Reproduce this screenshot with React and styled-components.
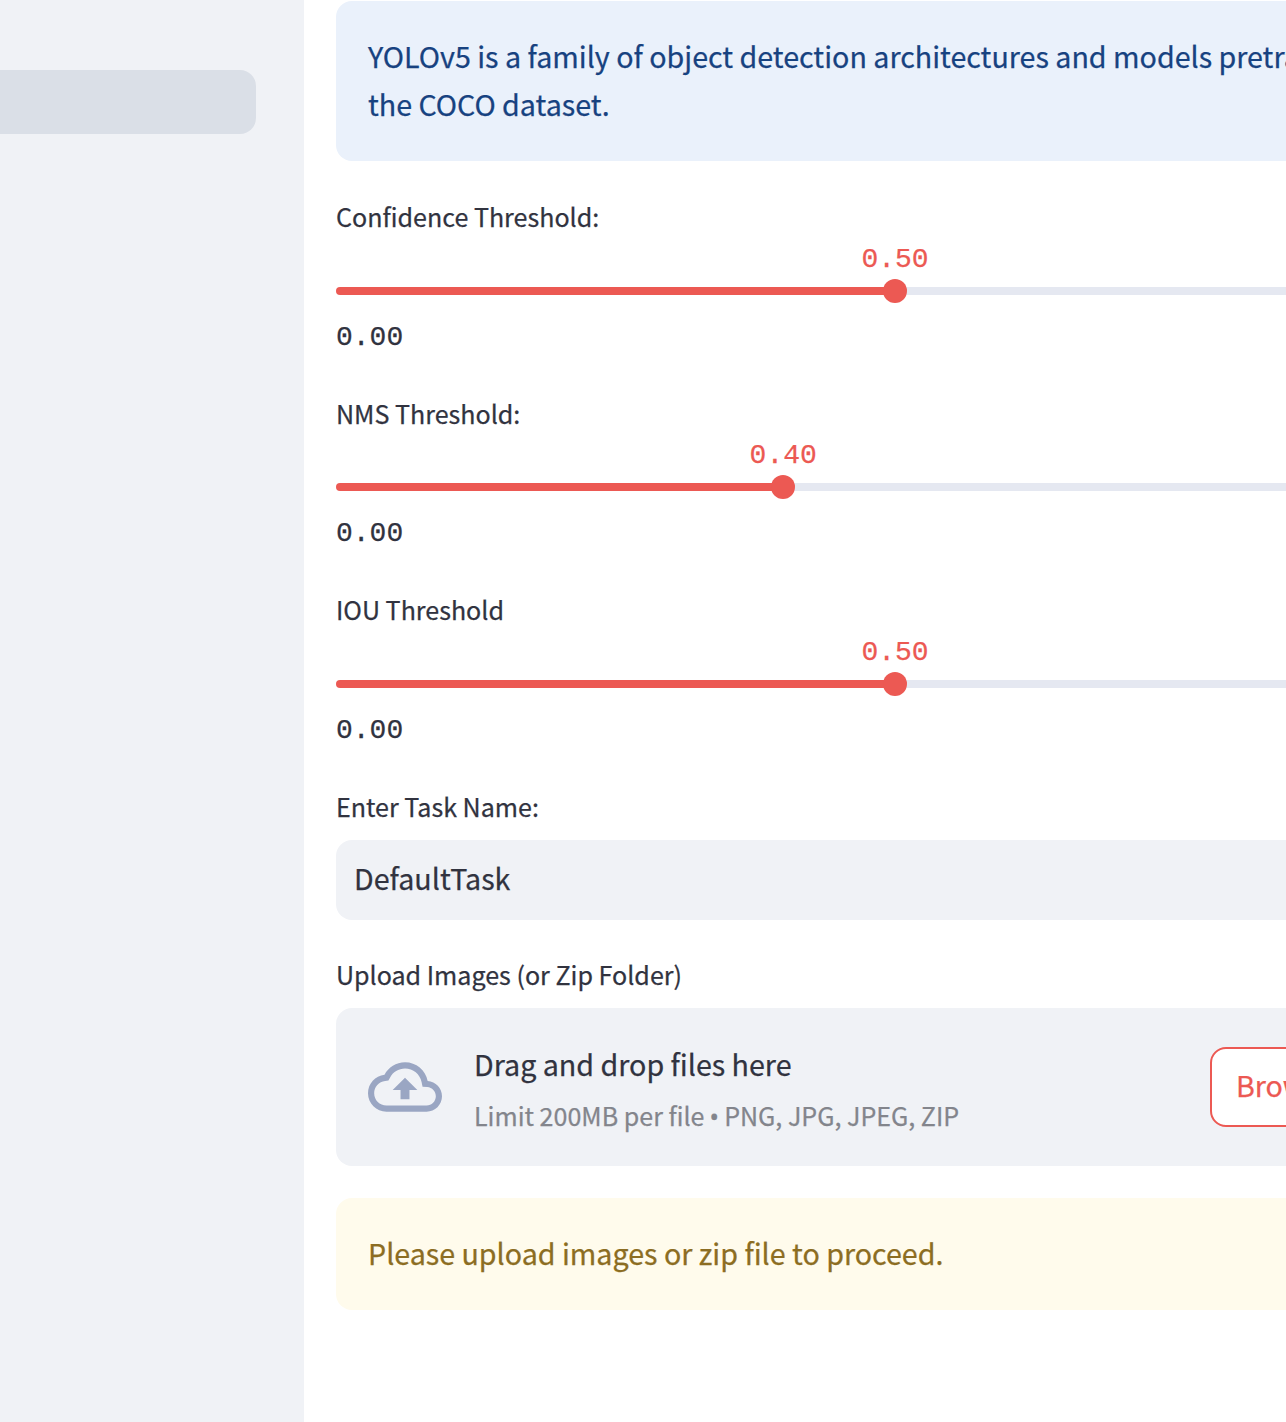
import React from "react";
import styled, { createGlobalStyle } from "styled-components";

const GlobalStyle = createGlobalStyle`
  *, *::before, *::after { box-sizing: border-box; }
  html, body { margin: 0; padding: 0; overflow: hidden; background: #ffffff; }
  body {
    font-family: "Noto Sans CJK SC", "Noto Sans", sans-serif;
    font-size: 28.65px;
    -webkit-text-stroke: 0.25px currentColor;
    color: #31333f;
  }
`;

const Page = styled.div`
  display: flex;
  width: 1286px;
  height: 1422px;
  overflow: hidden;
`;

const Sidebar = styled.nav`
  flex: 0 0 304px;
  padding: 70px 48px 0 0;
  background: #f0f2f6;
`;

const ActiveLink = styled.div`
  height: 64px;
  border-radius: 0 16px 16px 0;
  background: #dadfe7;
`;

const Main = styled.main`
  flex: 0 0 1182px;
  padding: 1px 32px 0;
`;

const Alert = styled.div`
  padding: 31px 32px 33px;
  border-radius: 16px;
  line-height: 48px;
  color: ${(p) => p.$color};
  background: ${(p) => p.$background};
`;

const Field = styled.section`
  height: ${(p) => p.$height}px;
  margin-top: 32px;
`;

const Label = styled.label`
  display: block;
  height: ${(p) => p.$height || 48}px;
  margin-bottom: 8px;
  font-size: 25.07px;
  line-height: ${(p) => p.$line || 46}px;
`;

const Value = styled.div`
  width: 68px;
  margin-left: calc(${(p) => p.$percent}% - 34px);
  font-family: "Liberation Mono", monospace;
  font-size: 28px;
  line-height: 32px;
  text-align: center;
  color: #ec5953;
`;

const Track = styled.div`
  display: flex;
  align-items: center;
  height: 24px;
  margin-top: 3px;
`;

const Filled = styled.div`
  flex: 0 0 calc(${(p) => p.$percent}% - 11px);
  height: 8px;
  border-radius: 4px 0 0 4px;
  background: #ec5953;
`;

const Thumb = styled.div`
  position: relative;
  z-index: 1;
  flex: 0 0 24px;
  height: 24px;
  margin: 0 -1px;
  border-radius: 50%;
  background: #ec5953;
`;

const Rest = styled.div`
  flex: 1;
  height: 8px;
  border-radius: 0 4px 4px 0;
  background: #e5e8f1;
`;

const Minimum = styled.div`
  margin-top: 19px;
  font-family: "Liberation Mono", monospace;
  font-size: 28px;
  line-height: 32px;
`;

const TextInput = styled.div`
  height: 80px;
  padding: 0 18px;
  border-radius: 16px;
  line-height: 75px;
  background: #f0f2f6;
`;

const Dropzone = styled.div`
  display: flex;
  align-items: center;
  height: 158px;
  padding: 0 32px;
  border-radius: 16px;
  background: #f0f2f6;
`;

const CloudIcon = styled.svg`
  flex: none;
  width: 74px;
  height: 74px;
  margin-right: 32px;
  fill: #9aa6c3;
`;

const DropText = styled.div`
  flex: 1;
  display: flex;
  flex-direction: column;
  padding-top: 4px;
`;

const DropTitle = styled.span`
  line-height: 52px;
`;

const DropHint = styled.span`
  font-size: 25.05px;
  line-height: 50px;
  color: #83858c;
`;

const Bullet = styled.span`
  margin: 0 -0.5px;
  font-family: "Noto Sans", sans-serif;
`;

const BrowseButton = styled.button`
  width: 212px;
  height: 80px;
  padding: 0 0 5px 24px;
  border: 2px solid #ec5953;
  border-radius: 16px;
  font: inherit;
  text-align: left;
  white-space: nowrap;
  color: #ec5953;
  background: #ffffff;
`;

function Slider({ label, value }) {
  const percent = value * 100;
  return (
    <Field $height={164.7}>
      <Label $height={42.6}>{label}</Label>
      <Value $percent={percent}>{value.toFixed(2)}</Value>
      <Track>
        <Filled $percent={percent} />
        <Thumb />
        <Rest />
      </Track>
      <Minimum>0.00</Minimum>
    </Field>
  );
}

export default function App() {
  return (
    <>
      <GlobalStyle />
      <Page>
        <Sidebar>
          <ActiveLink />
        </Sidebar>
        <Main>
          <Alert $color="#174280" $background="#eaf1fb">
            YOLOv5 is a family of object detection architectures and models pretrained on the COCO
            dataset.
          </Alert>
          <Slider label="Confidence Threshold:" value={0.5} />
          <Slider label="NMS Threshold:" value={0.4} />
          <Slider label="IOU Threshold" value={0.5} />
          <Field $height={137}>
            <Label $height={48.9}>Enter Task Name:</Label>
            <TextInput>DefaultTask</TextInput>
          </Field>
          <Field $height={214}>
            <Label $line={44}>Upload Images (or Zip Folder)</Label>
            <Dropzone>
              <CloudIcon viewBox="0 0 24 24">
                <path d="M19.35 10.04C18.67 6.59 15.64 4 12 4 9.11 4 6.6 5.64 5.35 8.04 2.34 8.36 0 10.91 0 14c0 3.31 2.69 6 6 6h13c2.76 0 5-2.24 5-5 0-2.64-2.05-4.78-4.65-4.96zM19 18H6c-2.21 0-4-1.79-4-4 0-2.05 1.53-3.76 3.56-3.97l1.07-.11.5-.95C8.08 7.14 9.94 6 12 6c2.62 0 4.88 1.86 5.39 4.43l.3 1.5 1.53.11c1.56.1 2.78 1.41 2.78 2.96 0 1.65-1.35 3-3 3zM8 13h2.55v3h2.9v-3H16l-4-4z" />
              </CloudIcon>
              <DropText>
                <DropTitle>Drag and drop files here</DropTitle>
                <DropHint>
                  Limit 200MB per file <Bullet>•</Bullet> PNG, JPG, JPEG, ZIP
                </DropHint>
              </DropText>
              <BrowseButton>Browse files</BrowseButton>
            </Dropzone>
          </Field>
          <Field $height={112}>
            <Alert $color="#8c6d22" $background="#fffbec">
              Please upload images or zip file to proceed.
            </Alert>
          </Field>
        </Main>
      </Page>
    </>
  );
}
